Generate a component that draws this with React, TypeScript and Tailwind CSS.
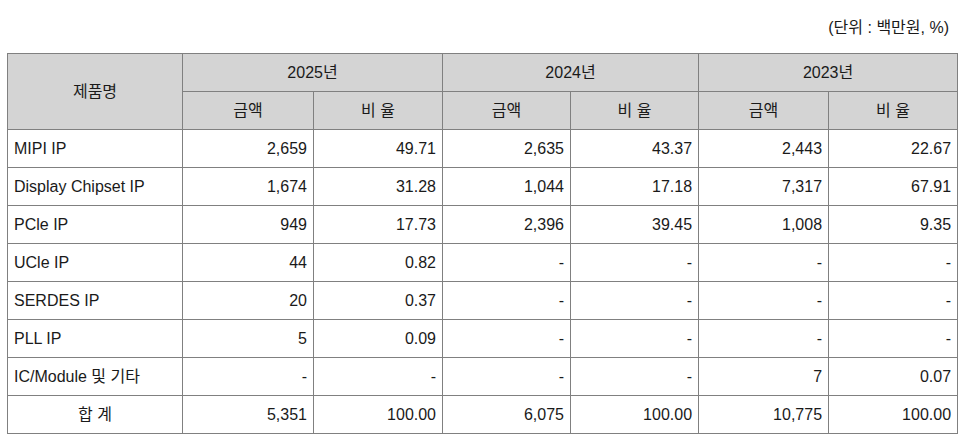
import React from 'react';

type Row = {
  name: string;
  cells: string[];
  total?: boolean;
};

const rows: Row[] = [
  { name: 'MIPI IP', cells: ['2,659', '49.71', '2,635', '43.37', '2,443', '22.67'] },
  { name: 'Display Chipset IP', cells: ['1,674', '31.28', '1,044', '17.18', '7,317', '67.91'] },
  { name: 'PCle IP', cells: ['949', '17.73', '2,396', '39.45', '1,008', '9.35'] },
  { name: 'UCle IP', cells: ['44', '0.82', '-', '-', '-', '-'] },
  { name: 'SERDES IP', cells: ['20', '0.37', '-', '-', '-', '-'] },
  { name: 'PLL IP', cells: ['5', '0.09', '-', '-', '-', '-'] },
  { name: 'IC/Module 및 기타', cells: ['-', '-', '-', '-', '7', '0.07'] },
  { name: '합계', cells: ['5,351', '100.00', '6,075', '100.00', '10,775', '100.00'], total: true },
];

const years = ['2025년', '2024년', '2023년'];

const th = 'h-[38px] border border-[#808080] bg-[#d4d4d4] font-normal text-center p-0';
const td = 'h-[38px] border border-[#808080] bg-white px-[6px] py-0';

export default function App() {
  return (
    <div
      className="w-[976px] h-[445px] bg-white text-[#1a1a1a] text-[16px] leading-none overflow-hidden"
      style={{ fontFamily: '"Liberation Sans", "Noto Sans CJK KR", sans-serif' }}
    >
      <div className="flex justify-end pr-[27px] pt-[19px] pb-[16px]">
        <span className="leading-[18px]">(단위 : 백만원, %)</span>
      </div>

      <div className="pl-[7px]">
        <table className="w-[950px] border-collapse border border-black table-fixed">
          <colgroup>
            <col className="w-[175px]" />
            <col className="w-[131px]" />
            <col className="w-[129px]" />
            <col className="w-[128px]" />
            <col className="w-[128px]" />
            <col className="w-[130px]" />
            <col className="w-[129px]" />
          </colgroup>
          <thead>
            <tr>
              <th rowSpan={2} className={th}>제품명</th>
              {years.map((y) => (
                <th key={y} colSpan={2} className={th}>{y}</th>
              ))}
            </tr>
            <tr>
              {years.map((y) => (
                <React.Fragment key={y}>
                  <th className={th}>금액</th>
                  <th className={th}>비 율</th>
                </React.Fragment>
              ))}
            </tr>
          </thead>
          <tbody>
            {rows.map((r) => (
              <tr key={r.name}>
                <td className={`${td} ${r.total ? 'text-center' : 'text-left'} whitespace-nowrap`}>
                  {r.total ? '합 계' : r.name}
                </td>
                {r.cells.map((c, i) => (
                  <td key={i} className={`${td} text-right`}>{c}</td>
                ))}
              </tr>
            ))}
          </tbody>
        </table>
      </div>
    </div>
  );
}
